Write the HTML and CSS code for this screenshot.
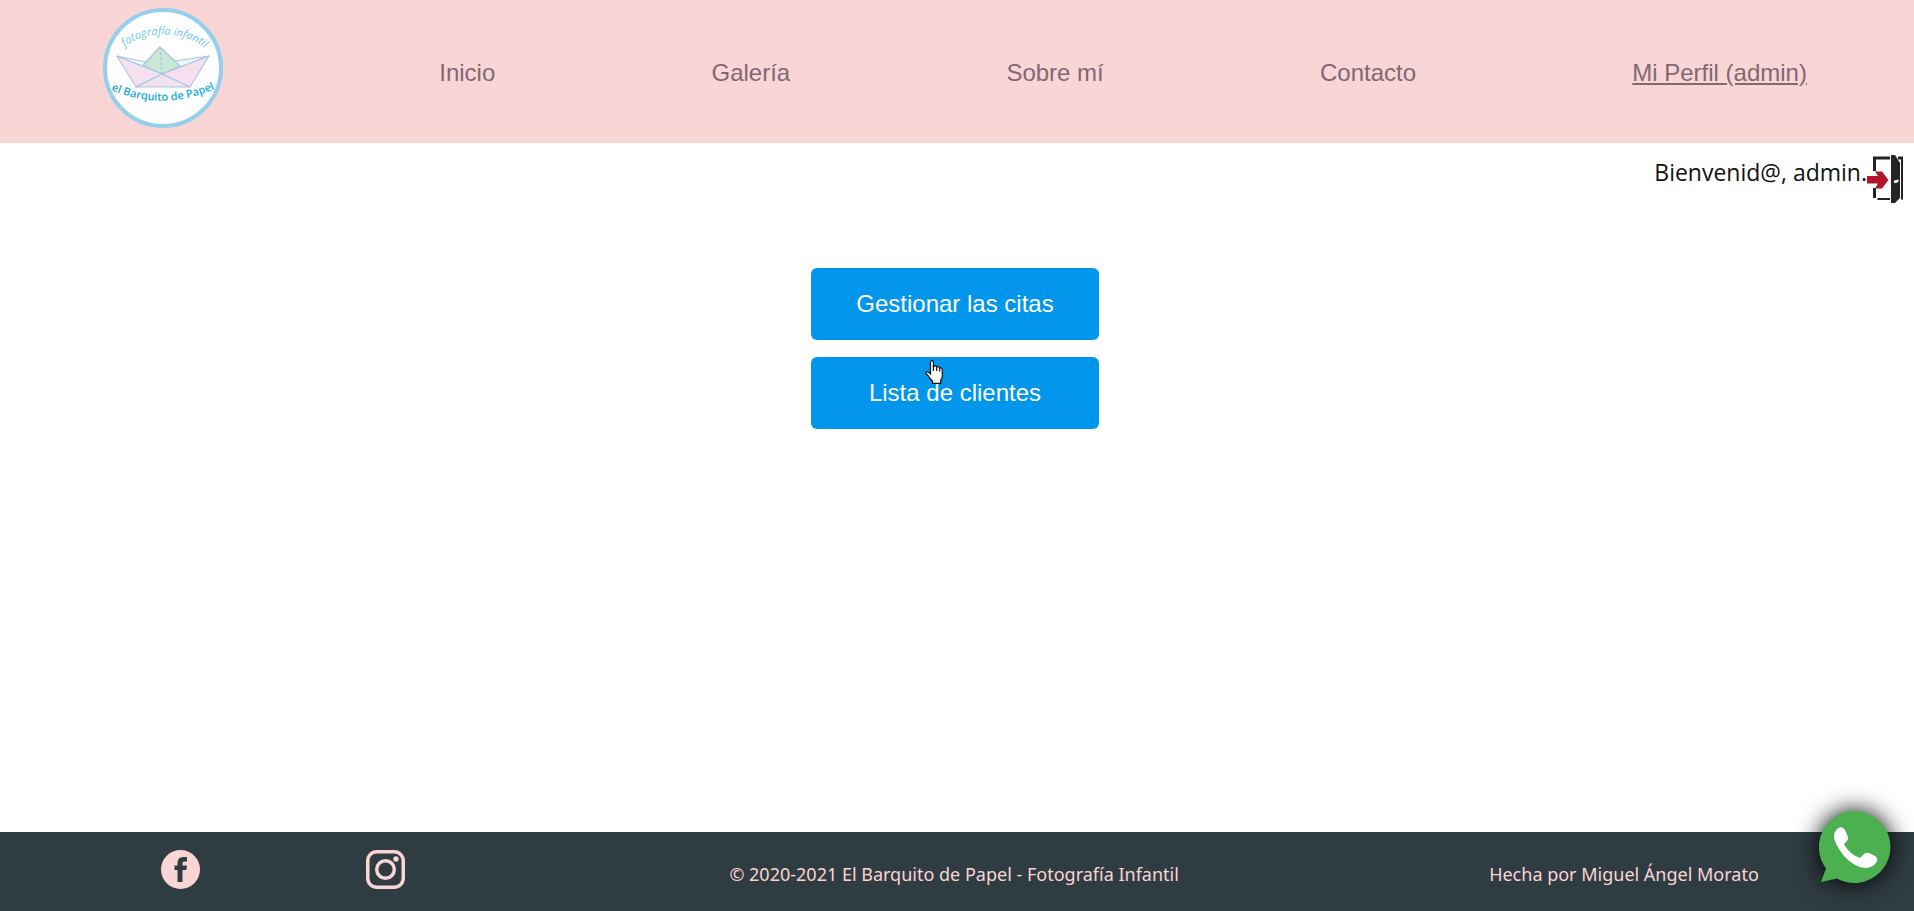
FILE: index.html
```html
<!DOCTYPE html>
<html lang="es">
<head>
<meta charset="utf-8">
<title>El Barquito de Papel</title>
<link rel="stylesheet" href="styles.css">
</head>
<body>
<header class="header">
  <nav class="nav" aria-label="Principal">
    <a class="logo" href="#" aria-label="El Barquito de Papel">
      <svg viewBox="0 0 120 120" width="120" height="120">
        <defs>
          <path id="arc-top" d="M18 43 C35 21 84 21 106 44"/>
          <path id="arc-bottom" d="M6 81 Q60 105 114 80"/>
        </defs>
        <circle cx="60" cy="60" r="58" fill="#fff" stroke="#94cfec" stroke-width="4"/>
        <g stroke="#a9c6e3" stroke-width="1.2" stroke-linejoin="round">
          <path d="M14 48 L59 66 L106 48 L72 53 L59 57 L43 54 Z" fill="#edfafd"/>
          <path d="M57 39 L40 57 L59 66 L77 58 Z" fill="#cbe7d5"/>
          <path d="M57 39 L59 66" stroke-dasharray="3 2"/>
          <path d="M14 48 L59 66 L33 79 Z" fill="#f6e0f0"/>
          <path d="M106 48 L59 66 L87 79 Z" fill="#f6e0f0"/>
          <path d="M33 79 L59 66 L87 79 Z" fill="#eee3ee"/>
        </g>
        <text class="logo-top"><textPath href="#arc-top" startOffset="50%">fotografía infantil</textPath></text>
        <text class="logo-bottom"><textPath href="#arc-bottom" startOffset="50%">el Barquito de Papel</textPath></text>
      </svg>
    </a>
    <a class="nav-link" href="#">Inicio</a>
    <a class="nav-link" href="#">Galería</a>
    <a class="nav-link" href="#">Sobre mí</a>
    <a class="nav-link" href="#">Contacto</a>
    <a class="nav-link active" href="#">Mi Perfil (admin)</a>
  </nav>
</header>
<main class="main">
  <div class="welcome">
    <span class="greeting">Bienvenid@, admin.</span>
    <a class="logout" href="#" aria-label="Cerrar sesión">
      <svg viewBox="0 0 36 48" width="36" height="48">
        <path d="M6 16 V1.500 H23 V4.500 H9 V16 Z M6 33 H9 V43 H6 Z M10.500 43 H23 V45 H10.500 Z M31 1.500 H36 V44.500 H34 V4.500 H31 Z" fill="#242426"/>
        <path d="M24 0 H28 L33 8 V43 L28 48 H24 Z" fill="#242426"/>
        <path d="M27 25.500 L31.500 24.500 V26.500 L29.500 28 H27 Z" fill="#fff"/>
        <path d="M0 21 H11 L8 16.500 H15 L21.500 25 L15 33.500 H8 L11 28.500 H0 Z" fill="#b0142f"/>
      </svg>
    </a>
  </div>
  <div class="actions">
    <button class="action" type="button">Gestionar las citas</button>
    <button class="action" type="button">Lista de clientes
      <svg class="pointer" viewBox="0 0 18 24" width="18" height="24" aria-hidden="true">
        <path d="M5.500 13 V2 Q5.500 .7 7 .7 Q8.400 .7 8.400 2 V6.500 Q11 5 11.700 7 Q14 6 14.700 8 Q17.300 7.200 17.300 10 V16 Q17.300 18 15.700 20 V23.300 H7.500 V21 Q5 19 3.500 16 L1 13.500 Q.5 11.500 2.500 12 Q4 12 5.500 14 Z" fill="#fff" stroke="#111" stroke-width="1.200"/>
        <path d="M8.400 6 V11 M11.700 7 V11 M14.700 8 V11.500" stroke="#111" stroke-width="1.200"/>
      </svg>
    </button>
  </div>
</main>
<footer class="footer">
  <div class="social">
    <a class="social-link" href="#" aria-label="Facebook">
      <svg viewBox="0 0 39 39" width="39" height="39">
        <circle cx="19.500" cy="19.500" r="19.500" fill="#f9d5d5"/>
        <path d="M16.500 32 V20 H13.500 V15.500 H16.500 V13 Q16.500 7 22 7 H26 V11.500 H23.500 Q21.500 11.500 21.500 13.500 V15.500 H26 L25.400 20 H21.500 V32 Z" fill="#2f3c42"/>
      </svg>
    </a>
    <a class="social-link" href="#" aria-label="Instagram">
      <svg viewBox="0 0 39 39" width="39" height="39" fill="none" stroke="#f9d5d5" stroke-width="3.500">
        <rect x="1.750" y="1.750" width="35.500" height="35.500" rx="9"/>
        <circle cx="19.500" cy="19.500" r="8.800"/>
        <circle cx="30" cy="9" r="2.700" fill="#f9d5d5" stroke="none"/>
      </svg>
    </a>
  </div>
  <p class="footer-text">© 2020-2021 El Barquito de Papel - Fotografía Infantil</p>
  <p class="footer-text">Hecha por Miguel Ángel Morato</p>
</footer>
<a class="whatsapp" href="#" aria-label="WhatsApp">
  <svg viewBox="0 0 72 73" width="72" height="73">
    <path d="M36 0 A36 36 0 1 1 18 67.500 L2 71 L7 57.500 A36 36 0 0 1 36 0 Z" fill="#4caf50"/>
    <path d="M18 18 Q23 14 26 19 L29 26 Q30 28 28 30 L25 33 Q30 43 41 47 L45 43 Q47 41 50 42 L56 45 Q59 47 58 50 Q55 57 46 57 Q35 56 25 45 Q14 31 15 24 Q16 20 18 18 Z" fill="#fff"/>
  </svg>
</a>
</body>
</html>
```
FILE: styles.css
```css
* {
  box-sizing: border-box;
}

body {
  display: flex;
  flex-direction: column;
  min-height: 100vh;
  margin: 0;
  background: #fff;
  color: #111;
  font-family: "Noto Sans", "Open Sans", sans-serif;
}

svg {
  display: block;
}

.header {
  padding: 8px 0 15px;
  background: #f9d5d5;
}

.nav {
  display: flex;
  align-items: center;
  justify-content: space-between;
  padding: 0 107px 0 103px;
}

.nav-link {
  padding-top: 10px;
  color: #836773;
  font: 24px "Liberation Sans", Arial, sans-serif;
  text-decoration: none;
}

.nav-link.active {
  text-decoration: underline;
}

.logo-top {
  fill: #6cc7e8;
  font: italic 11px "Open Sans", sans-serif;
  text-anchor: middle;
}

.logo-bottom {
  fill: #22a9dc;
  font: 600 11px "Open Sans", sans-serif;
  text-anchor: middle;
}

.main {
  flex: 1;
}

.welcome {
  display: flex;
  justify-content: flex-end;
  padding: 12px 11px 0 0;
}

.greeting {
  font-family: "Open Sans", "Noto Sans", sans-serif;
  font-size: 23px;
  line-height: 34px;
}

.actions {
  display: flex;
  flex-direction: column;
  align-items: center;
  gap: 17px;
  padding: 65px 4px 0 0;
}

.action {
  position: relative;
  width: 288px;
  height: 72px;
  border: 0;
  border-radius: 6px;
  background: #0295ec;
  color: #fff;
  font: 24px "Liberation Sans", Arial, sans-serif;
  cursor: pointer;
}

.pointer {
  position: absolute;
  top: 3px;
  left: 114px;
}

.footer {
  display: flex;
  align-items: center;
  justify-content: space-around;
  min-height: 79px;
  background: #2f3c42;
}

.social {
  display: flex;
  gap: 166px;
  padding: 0 14px 4px 6px;
}

.footer-text {
  margin: 0;
  padding-top: 4px;
  color: #f9d5d5;
  font-size: 18px;
  line-height: 24px;
}

.whatsapp {
  position: fixed;
  right: 23px;
  bottom: 27px;
  filter: drop-shadow(0 0 12px #000);
}
```
